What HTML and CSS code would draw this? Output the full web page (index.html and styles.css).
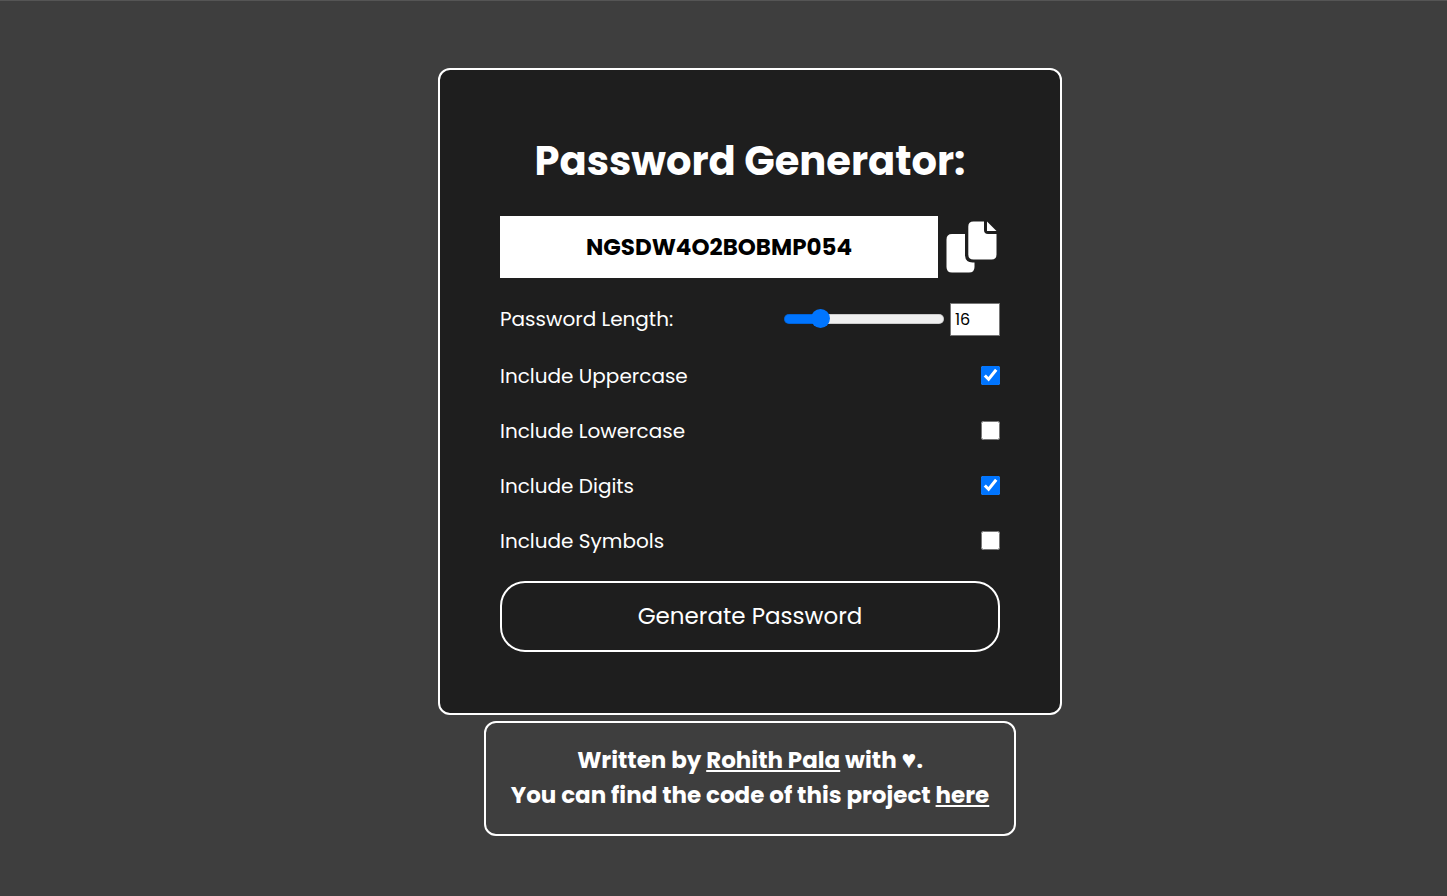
FILE: index.html
```html
<!DOCTYPE html>
<html lang="en">
<head>
<meta charset="utf-8">
<meta name="viewport" content="width=device-width, initial-scale=1">
<title>Password Generator</title>
<link rel="stylesheet" href="styles.css">
</head>
<body>
<main class="card">
  <h1 class="title">Password Generator:</h1>
  <div class="result">
    <input class="password" type="text" aria-label="Generated password" value="NGSDW4O2BOBMP054" readonly>
    <button class="copy" type="button" aria-label="Copy password">
      <svg class="copy-icon" viewBox="0 0 51 52" aria-hidden="true">
        <path d="M6 13H19V34.500Q19.500 41.500 26.500 41.500H28.500V46Q28.500 51.500 23 51.500H6Q.5 51.500 .5 46V18.500Q.5 13 6 13Z"/>
        <path d="M27.500 .5H38V9Q38 13 42 13H50.500V33.500Q50.500 38.500 45.500 38.500H27.500Q22.300 38.500 22.300 33.500V5.500Q22.300 .5 27.500 .5Z"/>
        <path d="M41 .5L50.500 10H41Z"/>
      </svg>
    </button>
  </div>
  <form class="options">
    <div class="row row-length">
      <label for="length">Password Length:</label>
      <div class="length-controls">
        <input class="slider" id="length" type="range" min="8" max="50" value="16">
        <input class="number" type="number" aria-label="Password length value" min="8" max="50" value="16">
      </div>
    </div>
    <div class="row"><label for="upper">Include Uppercase</label><input class="check" id="upper" type="checkbox" checked></div>
    <div class="row"><label for="lower">Include Lowercase</label><input class="check" id="lower" type="checkbox"></div>
    <div class="row"><label for="digits">Include Digits</label><input class="check" id="digits" type="checkbox" checked></div>
    <div class="row"><label for="symbols">Include Symbols</label><input class="check" id="symbols" type="checkbox"></div>
    <button class="generate" type="button">Generate Password</button>
  </form>
</main>
<footer class="credits">
  <p>Written by <a href="#author">Rohith Pala</a> with <span class="heart">♥</span>.<br>You can find the code of this project <a href="#code">here</a></p>
</footer>
</body>
</html>
```
FILE: styles.css
```css
* {
  box-sizing: border-box;
}

body {
  margin: 0;
  min-height: 100vh;
  padding: 67px 0 60px 53px;
  border-top: 1px solid #555;
  background: #3e3e3e;
  color: #fff;
  font-family: Poppins, Inter, "Noto Sans", sans-serif;
  font-size: 20px;
  display: flex;
  flex-direction: column;
  align-items: center;
  gap: 6px;
}

input,
button {
  font-family: inherit;
  margin: 0;
}

.card {
  width: 100%;
  max-width: 624px;
  padding: 61px 60px;
  border: 2px solid #fff;
  border-radius: 12px;
  background: #1e1e1e;
}

.title {
  margin: 0 0 25px;
  font-size: 40px;
  line-height: 60px;
  text-align: center;
}

.result {
  display: flex;
  align-items: center;
  gap: 8px;
  margin-bottom: 25px;
}

.password {
  flex: 1;
  min-width: 0;
  height: 62px;
  padding: 0 10px;
  border: 0;
  background: #fff;
  color: #000;
  font-size: 23px;
  font-weight: 700;
  text-align: center;
}

.copy {
  padding: 0 3px 0 0;
  border: 0;
  background: none;
  line-height: 0;
}

.copy-icon {
  width: 51px;
  height: 52px;
  fill: #fff;
}

.row {
  display: flex;
  align-items: center;
  justify-content: space-between;
  height: 30px;
  margin-bottom: 25px;
}

.row-length {
  height: 33px;
}

.row-length label {
  line-height: 31px;
}

.length-controls {
  display: flex;
  align-items: center;
  gap: 6px;
}

.slider {
  appearance: none;
  width: 160px;
  height: 20px;
  margin-bottom: 2px;
  background: none;
}

.slider::-webkit-slider-runnable-track {
  height: 10px;
  border-radius: 5px;
  background: linear-gradient(to right, #0075ff 23%, #efefef 23%);
  box-shadow: inset 0 0 0 1px rgba(0, 0, 0, 0.15);
}

.slider::-webkit-slider-thumb {
  appearance: none;
  width: 19px;
  height: 19px;
  margin-top: -5px;
  border-radius: 50%;
  background: #0075ff;
}

.number {
  width: 50px;
  height: 33px;
  padding: 0 4px;
  border: 1px solid #767676;
  background: #fff;
  color: #000;
  font-size: 16px;
}

.check {
  width: 19px;
  height: 19px;
  margin-bottom: 2px;
  accent-color: #0075ff;
}

.generate {
  display: block;
  width: 100%;
  height: 71px;
  padding: 0 0 2px;
  border: 2px solid #fff;
  border-radius: 25px;
  background: transparent;
  color: #fff;
  font-size: 23px;
}

.credits {
  max-width: 532px;
  width: 100%;
  padding: 20px 10px 21px;
  border: 2px solid #fff;
  border-radius: 12px;
  font-size: 23px;
  font-weight: 700;
  line-height: 35px;
  text-align: center;
}

.credits p {
  margin: 0;
}

.credits a {
  color: inherit;
}

.heart {
  font-family: "Liberation Sans", sans-serif;
  font-size: 25px;
  line-height: 1;
}
```
